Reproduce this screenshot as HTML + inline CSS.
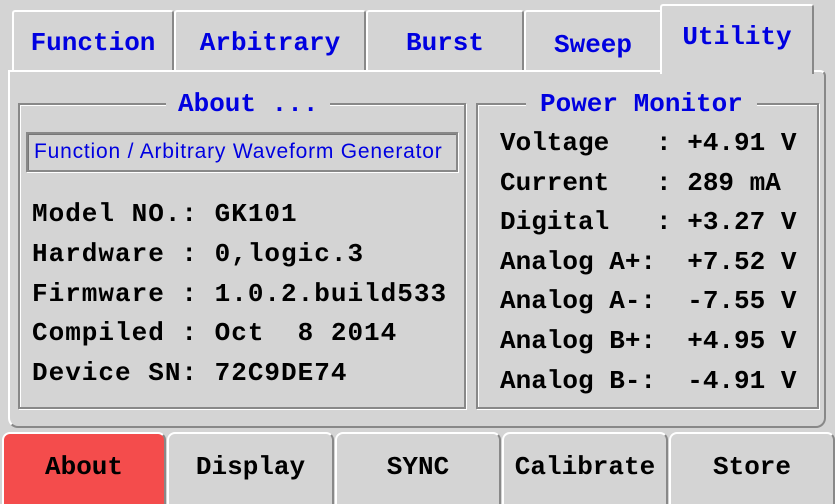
<!DOCTYPE html>
<html><head><meta charset="utf-8"><style>
*{margin:0;padding:0;box-sizing:border-box}
body{width:835px;height:501px;background:#d4d4d4;position:relative;overflow:hidden;font-family:"Liberation Mono",monospace;font-weight:bold}
.a{position:absolute}
.tab{position:absolute;background:#d4d4d4;border-top:2px solid #fff;border-left:2px solid #fff;border-right:2px solid #888;color:#0000e0;font-size:26px;display:flex;align-items:center;justify-content:center;border-radius:3px 3px 0 0}
.panel{position:absolute;left:8px;top:70px;width:818px;height:358px;border-top:2px solid #fff;border-left:2px solid #fff;border-right:2px solid #888;border-bottom:2px solid #888;border-radius:0 6px 10px 10px;background:#d4d4d4}
.grp{position:absolute;border:2px solid #888;box-shadow:inset 1px 1px 0 #fff,1px 1px 0 #fff}
.gt{position:absolute;top:-15px;background:#d4d4d4;color:#0000e0;font-size:26px;padding:0 14px;line-height:28px;white-space:pre}
.t{position:absolute;color:#000;font-size:26px;white-space:pre;line-height:30px}
.l{letter-spacing:1px}
.bt{position:absolute;top:432px;height:72px;background:#d4d4d4;border-top:2px solid #fff;border-left:2px solid #fff;border-right:2px solid #888;border-radius:8px 8px 0 0;display:flex;align-items:center;justify-content:center;font-size:26px;color:#000;padding-bottom:4px}
</style></head><body>
<div class="tab" style="left:12px;top:10px;width:162px;height:64px">Function</div>
<div class="tab" style="left:174px;top:10px;width:192px;height:64px">Arbitrary</div>
<div class="tab" style="left:366px;top:10px;width:158px;height:64px">Burst</div>
<div class="tab" style="left:524px;top:10px;width:138px;height:64px;padding-top:4px">Sweep</div>
<div class="panel"></div>
<div class="tab" style="left:660px;top:4px;width:154px;height:70px;padding-bottom:6px;border-bottom:none">Utility</div>

<div class="grp" style="left:18px;top:103px;width:448px;height:306px">
 <div class="gt" style="left:146px;padding:0 12px">About ...</div>
</div>
<div class="a" style="left:26px;top:132px;width:432px;height:40px;border:2px solid #888;box-shadow:inset 1px 1px 0 #777,1px 1px 0 #fff;color:#0000e0;font-family:'Liberation Sans',sans-serif;font-weight:normal;font-size:21px;display:flex;align-items:center;padding-left:6px;letter-spacing:0.8px;white-space:nowrap;overflow:hidden">Function / Arbitrary Waveform Generator</div>
<div class="t l" style="left:32px;top:199px">Model NO.: GK101</div>
<div class="t l" style="left:32px;top:239px">Hardware : 0,logic.3</div>
<div class="t l" style="left:32px;top:279px">Firmware : 1.0.2.build533</div>
<div class="t l" style="left:32px;top:318px">Compiled : Oct  8 2014</div>
<div class="t l" style="left:32px;top:358px">Device SN: 72C9DE74</div>

<div class="grp" style="left:476px;top:103px;width:343px;height:306px">
 <div class="gt" style="left:48px">Power Monitor</div>
</div>
<div class="t" style="left:500px;top:128px">Voltage   : +4.91 V</div>
<div class="t" style="left:500px;top:168px">Current   : 289 mA</div>
<div class="t" style="left:500px;top:207px">Digital   : +3.27 V</div>
<div class="t" style="left:500px;top:247px">Analog A+:  +7.52 V</div>
<div class="t" style="left:500px;top:286px">Analog A-:  -7.55 V</div>
<div class="t" style="left:500px;top:326px">Analog B+:  +4.95 V</div>
<div class="t" style="left:500px;top:366px">Analog B-:  -4.91 V</div>

<div class="bt" style="left:2px;width:164px;background:#f44c4c">About</div>
<div class="bt" style="left:167px;width:167px">Display</div>
<div class="bt" style="left:335px;width:166px">SYNC</div>
<div class="bt" style="left:502px;width:166px">Calibrate</div>
<div class="bt" style="left:669px;width:166px">Store</div>
</body></html>
